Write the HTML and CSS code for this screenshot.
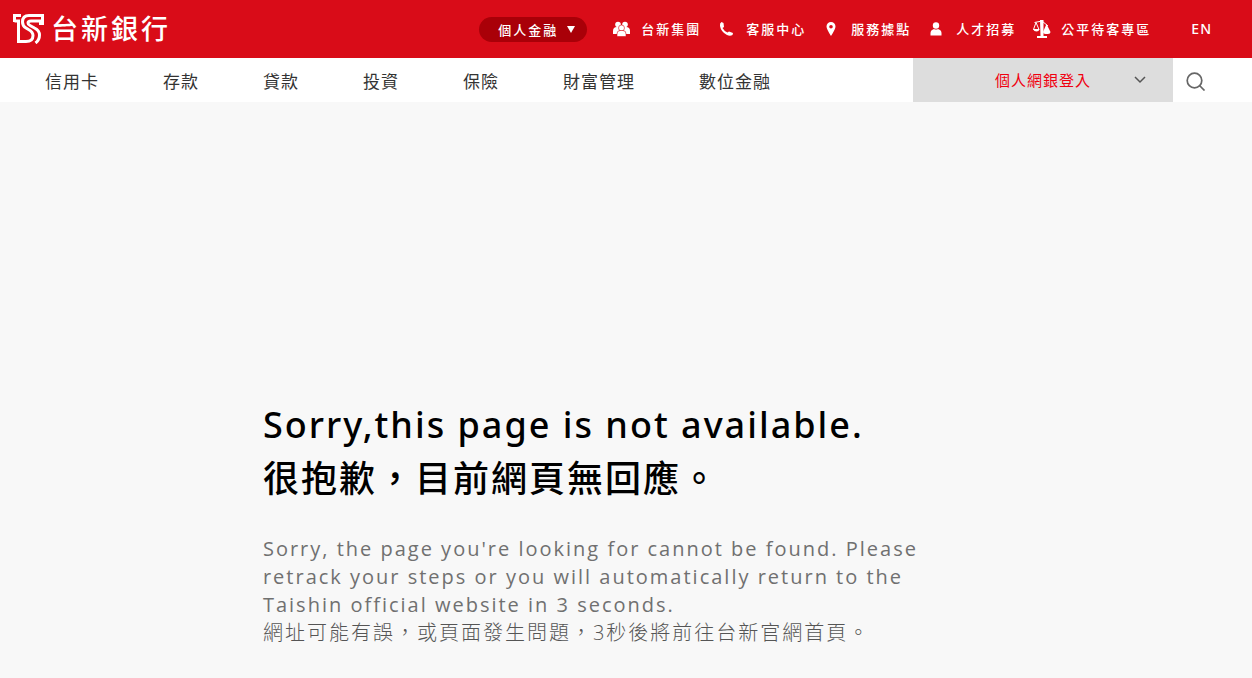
FILE: index.html
```html
<!DOCTYPE html>
<html lang="zh-Hant">
<head>
    <meta charset="UTF-8">
    <meta name="viewport" content="width=device-width, initial-scale=1.0">
    <title>台新銀行</title>
    <link rel="stylesheet" href="styles.css">
</head>
<body>
    <header>
        <div class="top-bar">
            <a class="logo" href="#">
                <svg class="logo-mark" viewBox="0 0 31 30" aria-hidden="true">
                    <path d="M1.500 8V1.500H8M1.500 7H5.500V27.500H13Q20 27.500 20 21.500Q20 18 15.500 15.500L13 14Q9.500 12 9.500 8Q9.500 1.500 16 1.500H29.500V9.500H26M29.500 7H18Q15 7 15 9Q15 10.500 17 11.500L21.500 14Q26.500 16.500 26.500 21Q26.500 26 22.500 29"/>
                </svg>
                <span>台新銀行</span>
            </a>
            <div class="top-menu">
                <button class="segment" type="button">個人金融<span class="segment-arrow"></span></button>
                <ul class="top-links">
                    <li><a href="#">
                        <svg class="icon" viewBox="0 0 18 18" aria-hidden="true">
                            <circle cx="5" cy="4.500" r="2.800"/><circle cx="12" cy="4.500" r="2.800"/>
                            <path d="M0 14V11Q0 7 4 7H6V14ZM17 14V11Q17 7 13 7H11V14Z"/>
                            <circle class="cut" cx="8.500" cy="8" r="3"/><path class="cut" d="M4 16.500V14Q4 10.500 7 10.500H10Q13 10.500 13 14V16.500Z"/>
                        </svg>台新集團</a></li>
                    <li><a href="#">
                        <svg class="icon" viewBox="0 0 18 18" aria-hidden="true">
                            <path d="M3.500 2L5.500 3L6 7L4.500 8Q6 11 9.500 12.500L11 11.500L15 13L14.500 15Q12 16.500 9 15Q3 12 2 6Q1.500 3 3.500 2Z"/>
                        </svg>客服中心</a></li>
                    <li><a href="#">
                        <svg class="icon" viewBox="0 0 18 18" aria-hidden="true">
                            <path fill-rule="evenodd" d="M8 2A4.500 4.500 0 0 1 12.500 6.500Q12.500 9 8 16Q3.500 9 3.500 6.500A4.500 4.500 0 0 1 8 2ZM8 5A1.800 1.800 0 1 0 8 8.600A1.800 1.800 0 1 0 8 5Z"/>
                        </svg>服務據點</a></li>
                    <li><a href="#">
                        <svg class="icon" viewBox="0 0 18 18" aria-hidden="true">
                            <circle cx="8" cy="5.500" r="3.200"/><path d="M2.500 15.500V13Q2.500 10 6 9Q8 10 10 9Q13.500 10 13.500 13V15.500Z"/>
                        </svg>人才招募</a></li>
                    <li><a href="#">
                        <svg class="icon" viewBox="0 0 18 18" aria-hidden="true">
                            <path d="M7 0H10.500V16H14V18H4V16H7.500Z"/>
                            <path class="line" d="M1.500 2.500L9 1L15 6M3 2.500L0.500 9.500H6L3 2.500"/>
                            <path d="M13.500 4L17.500 12Q17.500 14 15 14H12.500Q10 14 10 12ZM0 9H6.500Q6 11.500 3.500 11.500Q1 11.500 0 9Z"/>
                        </svg>公平待客專區</a></li>
                </ul>
                <a class="lang" href="#">EN</a>
            </div>
        </div>
        <nav class="main-nav">
            <ul class="nav-links">
                <li><a href="#">信用卡</a></li>
                <li><a href="#">存款</a></li>
                <li><a href="#">貸款</a></li>
                <li><a href="#">投資</a></li>
                <li><a href="#">保險</a></li>
                <li><a href="#">財富管理</a></li>
                <li><a href="#">數位金融</a></li>
            </ul>
            <button class="login" type="button">個人網銀登入
                <svg class="chevron" viewBox="0 0 12 8" aria-hidden="true"><path d="M1 1L6 6L11 1"/></svg>
            </button>
            <button class="search" type="button" aria-label="搜尋">
                <svg viewBox="0 0 20 20" aria-hidden="true"><circle cx="8.500" cy="9.500" r="7.300"/><path d="M13.500 14.500L18.500 19.500"/></svg>
            </button>
        </nav>
    </header>

    <main class="error">
        <h1>Sorry,this page is not available.<br>很抱歉，目前網頁無回應。</h1>
        <p lang="en">Sorry, the page you're looking for cannot be found. Please retrack your steps or you will automatically return to the Taishin official website in 3 seconds.</p>
        <p class="zh">網址可能有誤，或頁面發生問題，3秒後將前往台新官網首頁。</p>
    </main>
</body>
</html>
```

FILE: styles.css
```css
* {
    box-sizing: border-box;
}

body {
    margin: 0;
    background: #f8f8f8;
    color: #333;
    font-family: "Noto Sans", "Noto Sans CJK TC", sans-serif;
}

ul {
    display: flex;
    margin: 0;
    padding: 0;
    list-style: none;
}

a {
    color: inherit;
    text-decoration: none;
}

button {
    border: 0;
    font-family: inherit;
    cursor: pointer;
}

.top-bar {
    display: flex;
    align-items: center;
    justify-content: space-between;
    height: 58px;
    padding: 0 40px 0 13px;
    background: #d90c18;
    color: #fff;
}

.logo {
    display: flex;
    align-items: center;
    gap: 7px;
    font-size: 27px;
    font-weight: 500;
    line-height: 40px;
    letter-spacing: 3px;
}

.logo-mark {
    width: 31px;
    height: 30px;
    fill: none;
    stroke: #fff;
    stroke-width: 3;
}

.top-menu {
    display: flex;
    align-items: center;
    font-size: 13px;
    font-weight: 500;
    line-height: 20px;
    letter-spacing: 2px;
}

.segment {
    display: flex;
    align-items: center;
    gap: 9px;
    height: 25px;
    margin-right: 26px;
    padding: 0 12px 0 19px;
    border-radius: 13px;
    background: #a90008;
    color: #fff;
    font-size: 13px;
    font-weight: 500;
    letter-spacing: 2px;
}

.segment-arrow {
    border: solid transparent;
    border-width: 7px 4px 0;
    border-top-color: #fff;
}

.top-links {
    gap: 17px;
}

.top-links a {
    display: flex;
    align-items: center;
    gap: 10px;
}

.icon {
    width: 18px;
    height: 18px;
    fill: #fff;
}

.icon .cut {
    stroke: #d90c18;
    stroke-width: 0.6;
}

.icon .line {
    fill: none;
    stroke: #fff;
}

.lang {
    margin-left: 40px;
    font-size: 14px;
    font-weight: 500;
    letter-spacing: 1px;
}

.main-nav {
    display: flex;
    align-items: center;
    height: 44px;
    padding-left: 45px;
    background: #fff;
}

.nav-links {
    flex: 1;
    gap: 64px;
    font-size: 17px;
    letter-spacing: 1px;
}

.login {
    display: flex;
    align-items: center;
    justify-content: flex-end;
    gap: 43px;
    width: 260px;
    height: 44px;
    padding: 0 27px 2px 0;
    background: #ddd;
    color: #f00010;
    font-size: 15px;
    letter-spacing: 1px;
}

.chevron {
    width: 12px;
    height: 8px;
    margin-top: 2px;
    fill: none;
    stroke: #555;
    stroke-width: 1.5;
}

.search {
    display: flex;
    width: 79px;
    padding: 2px 13px 0;
    background: none;
}

.search svg {
    width: 20px;
    height: 20px;
    fill: none;
    stroke: #666;
    stroke-width: 1.7;
}

.error {
    width: 58%;
    margin: 0 auto;
    padding: 296px 0 32px;
}

h1 {
    margin: 0 0 29px;
    color: #000;
    font-size: 36px;
    font-weight: 500;
    line-height: 54px;
    letter-spacing: 2px;
}

p {
    max-width: 680px;
    margin: 0;
    color: #707070;
    font-family: "Open Sans", "Noto Sans CJK TC", sans-serif;
    font-size: 20px;
    line-height: 28px;
    letter-spacing: 2px;
}

.zh {
    color: #555;
    font-weight: 300;
}
```
